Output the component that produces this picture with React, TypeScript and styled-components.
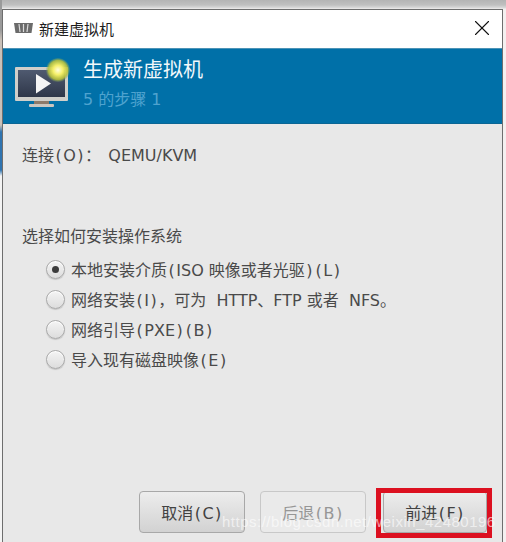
import React from 'react';
import styled, { createGlobalStyle } from 'styled-components';
import { X } from 'lucide-react';

const GlobalStyle = createGlobalStyle`
  html, body {
    margin: 0;
    padding: 0;
    background: #f4f0f0;
  }
  * {
    box-sizing: border-box;
  }
`;

const FONT = `"DejaVu Sans", "Noto Sans CJK SC", sans-serif`;

const Desktop = styled.div`
  position: relative;
  width: 506px;
  height: 542px;
  overflow: hidden;
  padding: 9px 3px 0 2px;
  background:
    linear-gradient(180deg, #9a9a9a 30px, #c9c0b8 40px, #c9c0b8 125px, #2f74b0 132px, #2f74b0 170px, #f4f4f4 176px) 0 0 / 2px 100% no-repeat,
    linear-gradient(180deg, #b4b4b4 0, #c0c0c0 5px, #dcdcdc 8px, #f4f0f0 9px);
  font-family: ${FONT};
`;

const Win = styled.div`
  height: 533px;
  display: flex;
  flex-direction: column;
  border: 1px solid #6e6e6e;
  border-bottom: none;
  background: #e8e8e8;
`;

const TitleBar = styled.div`
  height: 38px;
  flex: none;
  display: flex;
  align-items: center;
  padding: 0 7px 2px 11px;
  background: #fff;
  color: #1e1e1e;
  font-size: 15px;
`;

const TitleText = styled.span`
  margin-left: 6px;
  flex: 1;
`;

const Banner = styled.div`
  height: 76px;
  flex: none;
  display: flex;
  align-items: flex-start;
  padding: 3px 0 0 12px;
  background: #0070a8;
  border-top: 1px solid #4c93b6;
  border-bottom: 1px solid #0a6594;
`;

const BannerText = styled.div`
  margin-left: 10px;
  padding-top: 6px;
  display: flex;
  flex-direction: column;
`;

const Heading = styled.div`
  color: #f2f8fb;
  font-size: 20px;
  line-height: 24px;
`;

const StepText = styled.div`
  color: #4fa3cf;
  font-size: 16px;
  line-height: 18px;
  margin-top: 9px;
`;

const Body = styled.div`
  flex: 1;
  display: flex;
  flex-direction: column;
  padding: 22px 15px 0 19px;
  color: #4a4a4a;
  font-size: 16px;
  background: #e8e8e8;
`;

const Connection = styled.div`
  line-height: 20px;
  white-space: pre;
  word-spacing: -1.5px;
`;

const GroupLabel = styled.div`
  margin-top: 61px;
  line-height: 20px;
`;

const RadioList = styled.div`
  display: flex;
  flex-direction: column;
  gap: 10px;
  margin-top: 12px;
  padding-left: 24px;
`;

const RadioRow = styled.label`
  display: flex;
  align-items: center;
  gap: 6px;
  height: 20px;
  white-space: pre;
`;

const RadioMark = styled.span<{ $on?: boolean }>`
  width: 19px;
  height: 19px;
  flex: none;
  display: flex;
  align-items: center;
  justify-content: center;
  border-radius: 50%;
  border: 1px solid #a9a9a9;
  box-shadow: inset 0 1px 1px #fff, 0 1px 1px #c4c4c4;
  background: linear-gradient(180deg, #f4f4f4, #dddddd);

  &::after {
    content: '';
    display: ${({ $on }) => ($on ? 'block' : 'none')};
    width: 7px;
    height: 7px;
    border-radius: 50%;
    background: #3c3c3c;
  }
`;

const Paren = styled.span`
  padding: 0 1.5px;
`;

const Footer = styled.div`
  margin-top: auto;
  margin-bottom: 9px;
  display: flex;
  justify-content: flex-end;
  gap: 15px;
`;

const Button = styled.button<{ $disabled?: boolean; $marked?: boolean }>`
  position: relative;
  width: ${({ $marked }) => ($marked ? '104px' : '106px')};
  height: 42px;
  margin-left: ${({ $marked }) => ($marked ? '2px' : '0')};
  border-radius: 4px;
  border: 1px solid ${({ $disabled }) => ($disabled ? '#c8c8c8' : '#a8a8a8')};
  background: ${({ $disabled }) =>
    $disabled ? '#eaeaea' : 'linear-gradient(180deg, #ededed, #d2d2d2)'};
  color: ${({ $disabled }) => ($disabled ? '#969696' : '#424242')};
  font-family: ${FONT};
  font-size: 16px;
  padding: 0;

  ${({ $marked }) =>
    $marked &&
    `
    &::after {
      content: '';
      position: absolute;
      inset: -4px -6px -6px -8px;
      border: 5px solid #dc1020;
    }
  `}
`;

const Watermark = styled.div`
  position: absolute;
  left: 222px;
  top: 513px;
  color: rgba(255, 255, 255, 0.62);
  font-family: "Liberation Sans", sans-serif;
  font-size: 15px;
  letter-spacing: 0.5px;
  white-space: nowrap;
`;

const VmLogo = () => (
  <svg width="19" height="10" viewBox="0 0 19 10">
    <path d="M0 0h19l-1.500 10H1.500z" fill="#6b6b6b" />
    <path d="M5 1l1 8M9.500 1v8M14 1l-1 8" stroke="#dcdcdc" strokeWidth="1.200" />
  </svg>
);

const MonitorIcon = () => (
  <svg width="58" height="58" viewBox="0 0 58 58">
    <defs>
      <radialGradient id="glow">
        <stop offset="0" stopColor="#fffde0" />
        <stop offset="0.4" stopColor="#f5f06a" />
        <stop offset="0.8" stopColor="#b9c23c" stopOpacity="0.9" />
        <stop offset="1" stopColor="#7fa45c" stopOpacity="0.2" />
      </radialGradient>
      <linearGradient id="screen" x1="0" y1="0" x2="0" y2="1">
        <stop offset="0" stopColor="#4f5a70" />
        <stop offset="1" stopColor="#2f3749" />
      </linearGradient>
    </defs>
    <rect x="0" y="15" width="53" height="34" rx="1" fill="#d0cfca" />
    <rect x="3" y="18" width="47" height="27" fill="url(#screen)" />
    <path d="M21 22l15 9.500-15 10z" fill="#f5f5f5" />
    <rect x="19" y="49" width="15" height="3" fill="#8c7a6a" />
    <rect x="14" y="52" width="25" height="3" rx="1" fill="#c9c6c0" />
    <circle cx="43" cy="18" r="12" fill="url(#glow)" />
  </svg>
);

// brackets sit wider in the GTK font than in DejaVu
const spaced = (text: string) =>
  text.split(/([()])/).map((part, i) =>
    part === '(' || part === ')' ? <Paren key={i}>{part}</Paren> : part
  );

const options = [
  { label: '本地安装介质(ISO 映像或者光驱)(L)', on: true },
  { label: '网络安装(I)，可为  HTTP、FTP 或者  NFS。' },
  { label: '网络引导(PXE)(B)' },
  { label: '导入现有磁盘映像(E)' },
];

export default function App() {
  return (
    <Desktop>
      <GlobalStyle />
      <Win>
        <TitleBar>
          <VmLogo />
          <TitleText>新建虚拟机</TitleText>
          <X size={26} strokeWidth={1} color="#111" />
        </TitleBar>
        <Banner>
          <MonitorIcon />
          <BannerText>
            <Heading>生成新虚拟机</Heading>
            <StepText>5 的步骤 1</StepText>
          </BannerText>
        </Banner>
        <Body>
          <Connection>{spaced('连接(O)：  QEMU/KVM')}</Connection>
          <GroupLabel>选择如何安装操作系统</GroupLabel>
          <RadioList>
            {options.map((o) => (
              <RadioRow key={o.label}>
                <RadioMark $on={o.on} />
                <span>{spaced(o.label)}</span>
              </RadioRow>
            ))}
          </RadioList>
          <Footer>
            <Button>{spaced('取消(C)')}</Button>
            <Button $disabled>{spaced('后退(B)')}</Button>
            <Button $marked>{spaced('前进(F)')}</Button>
          </Footer>
        </Body>
      </Win>
      <Watermark>https://blog.csdn.net/weixin_42480196</Watermark>
    </Desktop>
  );
}
